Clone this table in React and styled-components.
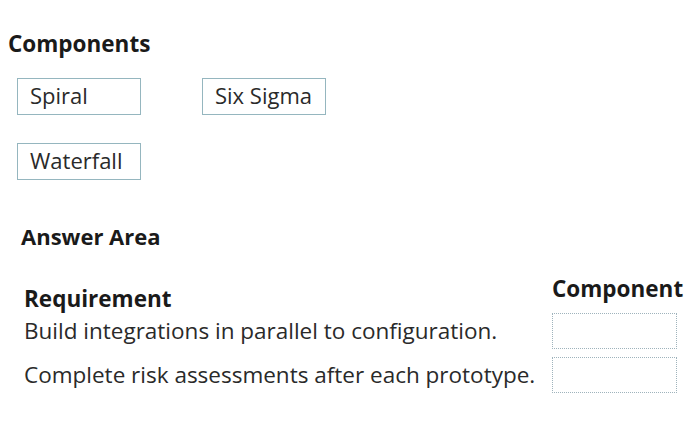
import styled, { createGlobalStyle } from 'styled-components';

const GlobalStyle = createGlobalStyle`
  body {
    margin: 0;
    background: #fff;
    font-family: "Open Sans", "Noto Sans", sans-serif;
    color: #1a1a1a;
  }
`;

const components = ['Spiral', 'Six Sigma', 'Waterfall'];
const requirements = [
  'Build integrations in parallel to configuration.',
  'Complete risk assessments after each prototype.',
];

function App() {
  return (
    <Page>
      <GlobalStyle />
      <Heading>Components</Heading>
      <ChoiceGrid>
        {components.map((name) => (
          <Choice key={name}>{name}</Choice>
        ))}
      </ChoiceGrid>

      <AnswerArea>
        <SubHeading>Answer Area</SubHeading>
        <Table>
          <ColumnTitle $offset={10}>Requirement</ColumnTitle>
          <ColumnTitle $offset={0}>Component</ColumnTitle>
          {requirements.map((req) => (
            <Row key={req}>
              <ReqText>{req}</ReqText>
              <DropSlot />
            </Row>
          ))}
        </Table>
      </AnswerArea>
    </Page>
  );
}

export default App;

const Page = styled.div`
  width: 700px;
  height: 423px;
  padding: 29px 0 0 8px;
  box-sizing: border-box;
`;

const Heading = styled.h2`
  margin: 0;
  font-size: 22.5px;
  font-weight: 700;
  line-height: 30px;
`;

const ChoiceGrid = styled.div`
  display: grid;
  grid-template-columns: 124px 124px;
  column-gap: 61px;
  row-gap: 28px;
  margin: 19px 0 0 9px;
`;

const Choice = styled.div`
  height: 37px;
  box-sizing: border-box;
  border: 1.5px solid #95b6bf;
  padding: 0 12px;
  font-size: 22px;
  line-height: 32px;
  color: #2a2a2a;
`;

const AnswerArea = styled.section`
  margin: 43px 0 0 13px;
`;

const SubHeading = styled.h3`
  margin: 0;
  font-size: 22px;
  font-weight: 700;
  line-height: 26px;
`;

const Table = styled.div`
  display: grid;
  grid-template-columns: 528px 125px;
  grid-template-rows: 29px 36px 36px;
  row-gap: 8px;
  margin: 27px 0 0 3px;
`;

const ColumnTitle = styled.div`
  font-size: 22.5px;
  font-weight: 700;
  line-height: 26px;
  align-self: start;
  margin-top: ${(p) => p.$offset}px;
  white-space: nowrap;
`;

const Row = styled.div`
  display: contents;
`;

const ReqText = styled.div`
  font-size: 22.5px;
  line-height: 36px;
  color: #2a2a2a;
  white-space: nowrap;
`;

const DropSlot = styled.div`
  height: 36px;
  box-sizing: border-box;
  border: 1.5px dotted #9fb3bc;
`;
